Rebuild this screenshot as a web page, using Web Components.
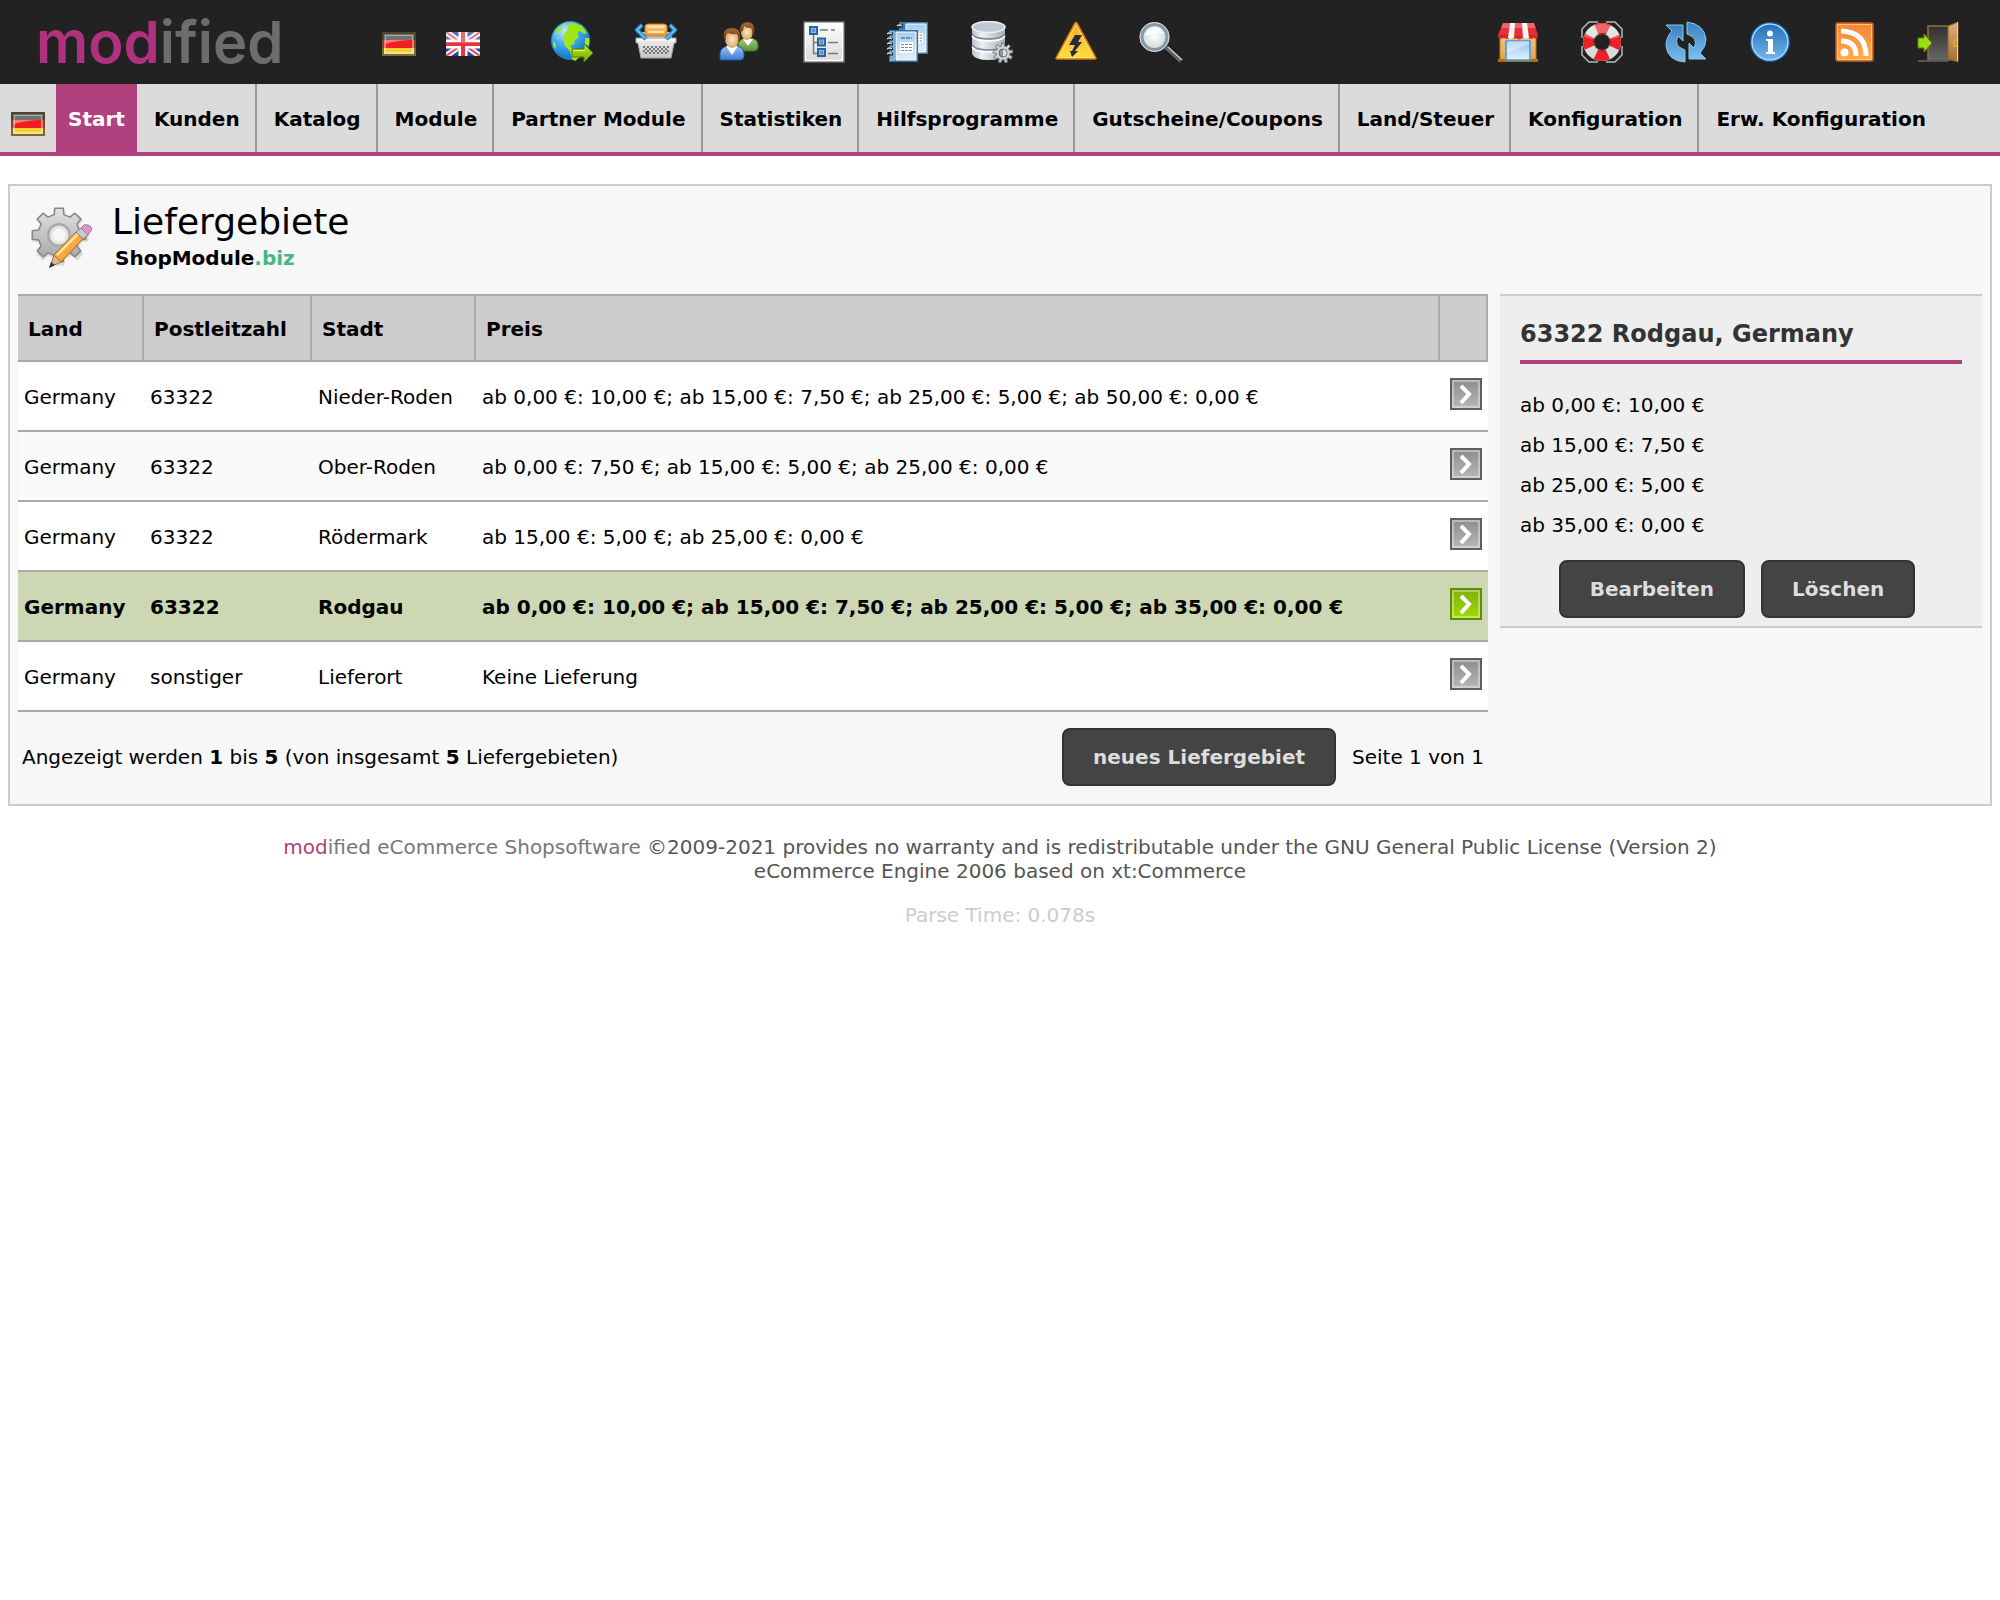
<!DOCTYPE html>
<html lang="de">
  <head>
    <meta charset="utf-8" />
    <title>Liefergebiete</title>
    <style>
      :root {
        --accent: #b0407e;
        --line: #aaa;
        --frame: #ccc;
      }
      body {
        margin: 0;
        background: #fff;
        color: #000;
        font: 20px/24px Verdana, "DejaVu Sans", sans-serif;
      }
    </style>
  </head>
  <body>
    <shop-header></shop-header>
    <shop-menu></shop-menu>
    <page-panel heading="Liefergebiete">
      <span slot="sub">ShopModule</span><span slot="suffix">.biz</span>
      <area-table></area-table>
      <info-box slot="side" heading="63322 Rodgau, Germany">
        <div>ab 0,00 €: 10,00 €</div>
        <div>ab 15,00 €: 7,50 €</div>
        <div>ab 25,00 €: 5,00 €</div>
        <div>ab 35,00 €: 0,00 €</div>
        <shop-button slot="actions">Bearbeiten</shop-button>
        <shop-button slot="actions">Löschen</shop-button>
      </info-box>
    </page-panel>
    <shop-footer></shop-footer>

    <script>
      const define = (name, render) => {
        customElements.define(name, class extends HTMLElement {
          connectedCallback() {
            if (!this.shadowRoot) {
              const template = document.createElement("template")
              template.innerHTML = render(this)
              this.attachShadow({ mode: "open" }).appendChild(template.content.cloneNode(true))
            }
          }
        })
      }

      const grad = (id, a, b) => `<linearGradient id="${id}" x1="0" y1="0" x2="0" y2="1"><stop stop-color="${a}"/><stop offset="1" stop-color="${b}"/></linearGradient>`

      // gear outline with n teeth around cx, cy
      const gear = (cx, cy, n, outer, inner) => {
        const points = []
        for (let i = 0; i < n; i++) {
          [[-0.3, inner], [-0.2, outer], [0.2, outer], [0.3, inner]].forEach(([d, r]) => {
            const a = (i + d) * 2 * Math.PI / n - Math.PI / 2
            points.push((cx + r * Math.cos(a)).toFixed(1) + "," + (cy + r * Math.sin(a)).toFixed(1))
          })
        }
        return points.join(" ")
      }

      const spiral = (x, y, n) => Array.from({ length: n }, (_, i) =>
        `<path d="M${x} ${y + i * 5}h5" stroke="#222" stroke-width="3"/><path d="M${x - 1} ${y + i * 5}q2-2 5 0" stroke="#d5dde3" stroke-width="1.3" fill="none"/>`).join("")

      const arrow = (a, b, edge) => `<defs>${grad("g", a, b)}</defs>
        <path fill="url(#g)" stroke="${edge}" stroke-width="2" d="M1 1h30v30H1z"/>
        <path fill="none" stroke="#fff" stroke-opacity=".5" stroke-width="1.5" d="M3 3h26v26H3z"/>
        <path fill="none" stroke="#fff" stroke-width="4" d="M11 8l8 8-8 9"/>`

      const icons = {
        de: [34, 24, `<path fill="#151515" d="M0 0h34v9H0z"/><path fill="#ee2020" d="M0 8h34v8H0z"/><path fill="#f4cf38" d="M0 16h34v8H0z"/>
          <path fill="#fff" fill-opacity=".4" d="M3 3h28v5q-14 0-28 4z"/>
          <path fill="none" stroke="#5c5130" stroke-opacity=".8" stroke-width="2" d="M1 1h32v22H1z"/>
          <path fill="none" stroke="#fff" stroke-opacity=".4" stroke-width="2" d="M3 3h28v18H3z"/>`],
        gb: [34, 24, `<path fill="#22469a" d="M0 0h34v24H0z"/>
          <path stroke="#f1eef4" stroke-width="6" d="M0 0l34 24M34 0L0 24"/>
          <path stroke="#e64a58" stroke-width="2" d="M0 0l34 24M34 0L0 24"/>
          <path stroke="#fff" stroke-width="9" d="M17 0v24M0 12h34"/>
          <path stroke="#e8333e" stroke-width="4" d="M17 0v24M0 12h34"/>
          <path fill="#fff" fill-opacity=".25" d="M0 0h34v11H0z"/>`],
        globe: [42, 42, `<defs><radialGradient id="g" cx=".35" cy=".25" r=".8"><stop stop-color="#bfeaff"/><stop offset=".5" stop-color="#3aa5e8"/><stop offset="1" stop-color="#0f6fb8"/></radialGradient>${grad("h", "#c4ec10", "#6fa800")}</defs>
          <circle cx="19.5" cy="19.5" r="19" fill="url(#g)" stroke="#1590d4"/>
          <path fill="#9fe61a" d="M17 3l6-1 8 3 5 7-3 1-4-3-3 2 2 4-4 3-1 4-4 2 3 4 5 1 3 5-6 5-3-2-2-8-5-5-2-7 1-5 4-5zM4 10l8-7-2 6-6 5zM2 20l3 3v5l-3-3zM34 17l4 0v8l-4-2z"/>
          <path fill="url(#h)" stroke="#547f00" d="M21 28h12v-5l9 9-9 9v-5H21z"/>
          <path stroke="#dff780" d="M22 29.500h12"/>`],
        basket: [42, 42, `<defs>${grad("g", "#f1f1f1", "#c4c4c6")}${grad("h", "#ffd28a", "#e59a2c")}</defs>
          <path fill="#d2d2d2" d="M6 11h31v8H6z"/>
          <rect x="10" y="3" width="22" height="12" rx="3" fill="url(#h)" stroke="#c57c1e"/><path stroke="#ffe5b5" stroke-width="2" d="M13 6h16M13 11h16"/>
          <path fill="url(#g)" stroke="#a9a9ac" d="M1 17h40v5h-2l-3 15H6L3 22H1z"/>
          <path stroke="#f8f8f8" stroke-width="2" d="M2 19h38"/>
          <path stroke="#77787b" stroke-width="2" stroke-dasharray="2 2" d="M8 26h27M10 28h24M8 30h27M10 32h24"/>
          <path fill="none" stroke="#1372ad" stroke-width="4.500" d="M11 18L2 9l5-5M31 18l9-9-5-5"/>
          <path fill="none" stroke="#5cb9ee" stroke-width="2.500" d="M11 18L2 9l5-5M31 18l9-9-5-5"/>`],
        users: [42, 42, `<defs>${grad("g", "#98c4f4", "#3c7ed2")}${grad("h", "#a6d07a", "#5c8e34")}${grad("k", "#a5692e", "#5f3410")}<radialGradient id="f"><stop stop-color="#ffebc5"/><stop offset="1" stop-color="#d9a66a"/></radialGradient></defs>
          <path fill="url(#h)" stroke="#446f24" d="M19 30v-7q1-5 8-6h4q8 1 8 7v3q-1 3-4 3z"/><path fill="#fff" d="M24 18h10l-5 7z"/>
          <ellipse cx="28" cy="11" rx="6" ry="8" fill="url(#f)"/><path fill="url(#k)" d="M21 11q-1-10 8-10 8 1 6 13l-2 2q1-6-1-9-5 0-7-2l-1 5z"/>
          <path fill="url(#g)" stroke="#1c57a8" d="M1 39v-7q1-6 8-7h8q8 1 8 8v3q-1 3-4 3z"/><path fill="#fff" d="M7 25h12l-6 9z"/>
          <ellipse cx="13" cy="18" rx="7" ry="9" fill="url(#f)"/><path fill="url(#k)" d="M5 18Q3 7 13 7q10 0 8 12l-2 3q1-6-1-9-6 1-9-1-3 2-2 7z"/>`],
        tree: [42, 42, `<defs>${grad("g", "#fff", "#d8d8da")}</defs>
          <path fill="url(#g)" stroke="#6c6c6c" stroke-width="1.500" d="M1 1h40v40H1z"/><path fill="none" stroke="#fff" stroke-width="1.500" d="M2.500 2.500h37v37h-37z"/>
          <path fill="none" stroke="#777" stroke-width="1.500" d="M10.500 13v19.500H15M10.500 21.500H15"/>
          <path fill="#8fbbe2" stroke="#2a62a2" stroke-width="2" d="M7 6h7v7H7zM15 17.500h7v7h-7zM15 28h7v7h-7z"/>
          <path fill="#5a93cb" d="M9 8h3v3H9zM17 19.500h3v3h-3zM17 30h3v3h-3z"/>
          <path stroke="#777" stroke-width="1.500" d="M17 9h8M28 9h4M25 21.500h10M25 32.500h10"/>`],
        docs: [42, 42, `<defs>${grad("g", "#a9cef0", "#dceefb")}</defs>
          <path fill="#3f7db5" d="M12 1h29v32H12z"/><path fill="url(#g)" stroke="#fff" d="M19 3h20v28H19z"/>
          <path fill="#fff" d="M29 12h7v10h-7z"/><path stroke="#888" stroke-dasharray="2 1" d="M30 14h5M30 17h5M30 20h5"/>${spiral(11, 5, 1)}
          <path fill="#3273ac" d="M2 9h29v32H2z"/><path fill="url(#g)" stroke="#fff" d="M9 11h20v28H9z"/><path fill="#78afd9" d="M3 10h5v30H3z"/>
          <path stroke="#4882ad" stroke-width="1.500" stroke-dasharray="4 1" d="M14 17h11"/><path fill="#fff" d="M13 21h13v11H13z"/>
          <path stroke="#858585" stroke-dasharray="3 1" d="M14 23.500h11M14 26.500h11M14 29.500h11"/>${spiral(1, 13, 5)}`],
        database: [42, 42, `<defs><linearGradient id="g"><stop stop-color="#b9c0ca"/><stop offset=".3" stop-color="#eef1f5"/><stop offset="1" stop-color="#a4acb7"/></linearGradient></defs>
          <path fill="url(#g)" d="M1 5v28q3 6 16.500 6T34 33V5z"/>
          <path fill="none" stroke="#7b8796" stroke-width="1.500" d="M1 13q3 5 16.500 5T34 13M1 24q3 5 16.500 5T34 24"/>
          <path fill="none" stroke="#fff" stroke-width="1.500" d="M1 15q3 5 16.500 5T34 15M1 26q3 5 16.500 5T34 26"/>
          <ellipse cx="17.500" cy="6" rx="16.500" ry="5.500" fill="#bfc9d4" stroke="#edf1f4" stroke-width="1.500"/>
          <polygon fill="#d3d3d3" stroke="#777" points="${gear(32, 32, 9, 10, 7)}"/><circle cx="32" cy="32" r="4" fill="#8d949c" stroke="#5e6670"/>
          <path fill="#d9e2e8" d="M32 28.500v7a3.500 3.500 0 0 0 0-7z"/>`],
        warning: [42, 42, `<defs>${grad("g", "#f6a62c", "#fde23c")}</defs>
          <path fill="url(#g)" stroke="#d97b0c" stroke-width="1.500" stroke-linejoin="round" d="M20 2q1-1 2 0l19 35q0 1-1 1H2q-1 0-1-1z"/>
          <path fill="none" stroke="#ffe27c" d="M21 4L3.500 36.500h35z"/>
          <path fill="#272b3d" d="M20 14h7l-4 7h4l-7 9h3l-6 6-2-6h2l3-6h-6z"/>`],
        search: [44, 42, `<defs><radialGradient id="g"><stop stop-color="#fff"/><stop offset=".8" stop-color="#d4dfe1"/><stop offset="1" stop-color="#aebbbf"/></radialGradient></defs>
          <path stroke="#111" stroke-width="7" d="M28 27l13 12"/><path stroke="#606060" stroke-width="5" d="M27 26l15 14"/><path stroke="#c4c4c4" stroke-width="1.500" d="M29 26l14 13"/>
          <circle cx="15.500" cy="16" r="13" fill="url(#g)" stroke="#8798a5" stroke-width="4"/><circle cx="15.500" cy="16" r="14.500" fill="none" stroke="#dce0e2"/>
          <path fill="#fff" fill-opacity=".8" d="M6 15q1-9 11-9 7 1 8 7-8-2-19 2z"/>`],
        shop: [42, 42, `<defs>${grad("g", "#96c0ee", "#e4f3ff")}${grad("h", "#f5c675", "#e2a24c")}</defs>
          <path fill="url(#h)" stroke="#bb7c26" d="M3 15h36v24H3z"/><path fill="#b06e10" d="M1 38h40v3H1z"/>
          <path fill="url(#g)" stroke="#3a9ae6" stroke-width="1.500" d="M9 20h24v19H9z"/><path fill="#fff" fill-opacity=".4" d="M10 32l22-9v-3H10z"/>
          <path fill="#e5303a" d="M6 2h31l4 12v2q-2 3-4 1-3 2-6 0-3 2-6 0-3 3-6 0-3 2-6 0-3 2-6 0-4 2-6-1v-2z"/>
          <path fill="#f5f5f5" d="M13 2h5l-1 15q-3 2-6 0zM25 2h5l2 15q-4 2-6 0z"/>
          <path fill="#fff" fill-opacity=".25" d="M6 2h31l2 5H4z"/><path stroke="#bd141c" d="M1 15h10M32 15h9M18 16h7"/>`],
        help: [42, 42, `<path fill="none" stroke="#b4b9bb" stroke-width="1.500" d="M17 1H8L1 8v9M25 1h9l7 7v9M17 41H8l-7-7v-9M25 41h9l7-7v-9"/>
          <circle cx="21" cy="21" r="13.500" fill="none" stroke="#d9dcd8" stroke-width="11"/>
          <circle cx="21" cy="21" r="13.500" fill="none" stroke="#ec2226" stroke-width="11" stroke-dasharray="12 9.200" stroke-dashoffset="6"/>
          <path fill="none" stroke="#fff" stroke-opacity=".3" stroke-width="9" d="M8 17a13.500 13.500 0 0 1 26 0"/>
          <circle cx="21" cy="21" r="8.500" fill="none" stroke="#000" stroke-opacity=".3"/>`],
        reload: [42, 42, `<defs>${grad("g", "#3a83c0", "#7bbdec")}</defs>
          <g fill="url(#g)" stroke="#8bc5ee" stroke-linejoin="round"><path d="M1 4h17v16l-5-5q-5 10 7 14v12Q3 40 1 25q0-9 6-15z"/>
          <path d="M22 1q17 2 19 17 0 8-6 14l6 6H24V22l5 5q5-10-7-14z"/></g>`],
        info: [42, 42, `<defs>${grad("g", "#2570b8", "#74b6ec")}</defs>
          <circle cx="21" cy="21" r="20" fill="#1559a6"/><circle cx="21" cy="21" r="18" fill="url(#g)" stroke="#a6daff" stroke-width="1.500"/>
          <circle cx="21" cy="12.500" r="3" fill="#fff"/><path fill="#fff" d="M17 18h7v13h2v2h-9v-2h2V20h-2z"/>`],
        rss: [42, 42, `<defs>${grad("g", "#f5853a", "#ffad4e")}</defs>
          <rect x="3" y="2" width="37" height="38" rx="2" fill="url(#g)" stroke="#cf5c18" stroke-width="1.500"/><path fill="none" stroke="#ffc28b" d="M4.500 3.500h34v35h-34z"/>
          <circle cx="11.500" cy="31.500" r="4" fill="#fff"/><g fill="none" stroke="#fff" stroke-width="5"><path d="M8 20q15 0 15 15M8 10q25 1 25 25"/></g>`],
        exit: [42, 42, `<defs>${grad("g", "#303030", "#686868")}${grad("h", "#dcb176", "#a36f31")}</defs>
          <path fill="url(#g)" stroke="#9c6b34" stroke-width="1.500" d="M11 40V5h22v35"/><path stroke="#555" stroke-width="2" d="M1 40h30"/>
          <path fill="url(#h)" stroke="#8c5c26" d="M31 5l10-4v40l-10-3z"/><path stroke="#f3cf98" d="M40.500 1v39"/><path fill="none" stroke="#eaaf29" stroke-width="1.500" d="M40 19h-3v6h3"/>
          <path fill="#9cdc12" stroke="#508b00" d="M1 17h6v-4l8 9-8 9v-4H1z"/>`],
        settings: [64, 64, `<defs>${grad("g", "#e2e2e3", "#a3a4a7")}<linearGradient id="h" x1="0" y1="0" x2="1" y2="1"><stop stop-color="#ffd375"/><stop offset="1" stop-color="#e78918"/></linearGradient></defs>
          <polygon fill="#000" fill-opacity=".12" points="${gear(29, 31, 8, 29, 22)}"/>
          <polygon fill="url(#g)" stroke="#85868a" stroke-width="1.500" stroke-linejoin="round" points="${gear(28, 29, 8, 27, 21)}"/>
          <circle cx="28" cy="29" r="12" fill="#a9aaad"/><circle cx="28" cy="29" r="8" fill="#f7f7f7" stroke="#e5e5e5" stroke-width="3"/>
          <path fill="#e0b88a" stroke="#9a7140" d="M19 61l4-12 7 7z"/><path fill="#333" d="M18 62l2-6 4 3z"/>
          <path fill="url(#h)" stroke="#ba6a10" d="M23 49l22-23 7 7-22 23z"/><path stroke="#ffe9ab" stroke-width="2" d="M26 49l21-21"/>
          <path fill="#c7cbd0" stroke="#7d8288" d="M45 26l5-4 7 7-5 4z"/><path fill="#d897c6" stroke="#ac6f9e" d="M50 22l3-3q3-1 6 1t1 5l-3 4z"/>`],
        arrow: [32, 32, arrow("#8b8b8b", "#b9b9b9", "#5f5f5f")],
        "arrow-on": [32, 32, arrow("#7fae0c", "#9fdc00", "#5a9002")],
      }

      define("shop-icon", (el) => {
        const [w, h, shapes] = icons[el.getAttribute("name")]
        return `
          <style>
            :host { display: inline-block; vertical-align: top; }
            svg { display: block; width: ${w}px; height: ${h}px; }
          </style>
          <svg viewBox="0 0 ${w} ${h}" aria-hidden="true">${shapes}</svg>`
      })

      define("shop-button", () => `
        <style>
          :host { display: inline-block; }
          button {
            display: block;
            padding: 15px 29px;
            border: 2px solid #333;
            border-radius: 8px;
            background: #444;
            color: #ddd;
            font: inherit;
            font-weight: bold;
            cursor: pointer;
          }
        </style>
        <button type="button"><slot></slot></button>`)

      const links = (list) => list.map(([name, label]) =>
        `<a href="#" aria-label="${label}"><shop-icon name="${name}"></shop-icon></a>`).join("")

      define("shop-header", () => `
        <style>
          :host {
            display: flex;
            align-items: center;
            height: 84px;
            padding: 0 41px 0 36px;
            background: #222;
          }
          nav { display: flex; align-items: center; gap: 42px; }
          .logo {
            width: 346px;
            color: #6d6d6d;
            font: 600 58px/64px Inter, sans-serif;
            text-decoration: none;
          }
          .logo span { color: #b0327e; }
          .lang { gap: 30px; padding-top: 4px; margin-right: 71px; }
          .tools { margin-left: auto; }
          nav a { display: block; }
        </style>
        <a class="logo" href="#"><span>mod</span>ified</a>
        <nav class="lang">${links([["de", "Deutsch"], ["gb", "English"]])}</nav>
        <nav>${links([["globe", "Shop"], ["basket", "Bestellungen"], ["users", "Kunden"], ["tree", "Kategorien"], ["docs", "Content"], ["database", "Datenbank"], ["warning", "Logs"], ["search", "Suche"]])}</nav>
        <nav class="tools">${links([["shop", "Shop"], ["help", "Hilfe"], ["reload", "Cache"], ["info", "Info"], ["rss", "News"], ["exit", "Abmelden"]])}</nav>`)

      define("shop-menu", () => `
        <style>
          :host {
            display: flex;
            border-bottom: 4px solid var(--accent);
            background: #dbdbdb;
            font-weight: bold;
            white-space: nowrap;
          }
          a {
            padding: 23px 15px 21px 17px;
            border-right: 2px solid #999;
            color: #000;
            text-decoration: none;
          }
          a:last-child { border: 0; }
          .flag { padding: 28px 11px 0; border: 0; }
          .active {
            padding: 23px 12px 21px;
            border: 0;
            background: var(--accent);
            color: #fff;
          }
        </style>
        <a class="flag" href="#" aria-label="Deutsch"><shop-icon name="de"></shop-icon></a>
        <a class="active" href="#">Start</a>
        ${["Kunden", "Katalog", "Module", "Partner Module", "Statistiken", "Hilfsprogramme", "Gutscheine/Coupons", "Land/Steuer", "Konfiguration", "Erw. Konfiguration"].map((t) => `<a href="#">${t}</a>`).join("")}`)

      define("page-panel", (el) => `
        <style>
          :host {
            display: block;
            margin: 28px 8px;
            padding: 0 8px 18px;
            border: 2px solid var(--frame);
            background: #f7f7f7;
          }
          header { display: flex; gap: 17px; height: 88px; padding: 20px 13px 0; }
          h1 { margin: 0; font-weight: normal; font-size: 36px; line-height: 32px; }
          p { margin: 8px 3px; font-weight: bold; }
          .suffix { color: #48b587; }
          .columns {
            display: grid;
            grid-template-columns: 1fr 482px;
            gap: 12px;
            align-items: start;
          }
        </style>
        <header>
          <shop-icon name="settings"></shop-icon>
          <div>
            <h1>${el.getAttribute("heading")}</h1>
            <p><slot name="sub"></slot><span class="suffix"><slot name="suffix"></slot></span></p>
          </div>
        </header>
        <div class="columns">
          <main><slot></slot></main>
          <slot name="side"></slot>
        </div>`)

      const areas = [
        ["Germany", "63322", "Nieder-Roden", "ab 0,00 €: 10,00 €; ab 15,00 €: 7,50 €; ab 25,00 €: 5,00 €; ab 50,00 €: 0,00 €"],
        ["Germany", "63322", "Ober-Roden", "ab 0,00 €: 7,50 €; ab 15,00 €: 5,00 €; ab 25,00 €: 0,00 €"],
        ["Germany", "63322", "Rödermark", "ab 15,00 €: 5,00 €; ab 25,00 €: 0,00 €"],
        ["Germany", "63322", "Rodgau", "ab 0,00 €: 10,00 €; ab 15,00 €: 7,50 €; ab 25,00 €: 5,00 €; ab 35,00 €: 0,00 €"],
        ["Germany", "sonstiger", "Lieferort", "Keine Lieferung"],
      ]
      const selected = 3

      define("area-table", () => `
        <style>
          :host { display: block; }
          table { width: 100%; border-collapse: separate; border-spacing: 0; table-layout: fixed; }
          .land { width: 126px; }
          .zip { width: 168px; }
          .city { width: 164px; }
          .go { width: 48px; }
          th, td { box-sizing: border-box; text-align: left; white-space: nowrap; }
          th {
            height: 68px;
            padding: 2px 10px 0;
            border: solid var(--line);
            border-width: 2px 2px 2px 0;
            background: #ccc;
          }
          td { height: 70px; padding: 2px 6px 0; border-bottom: 2px solid var(--line); background: #fff; }
          tr:nth-child(even) td { background: #fafafa; }
          tr.selected td { background: #cdd7b4; font-weight: bold; }
          td:last-child { padding: 0 6px 4px; text-align: right; }
          td a { display: block; }
          footer { display: flex; align-items: center; gap: 16px; padding: 16px 4px 0; }
          footer span:first-child { flex: 1; }
        </style>
        <table>
          <colgroup><col class="land"><col class="zip"><col class="city"><col><col class="go"></colgroup>
          <thead>
            <tr><th>Land</th><th>Postleitzahl</th><th>Stadt</th><th>Preis</th><th></th></tr>
          </thead>
          <tbody>
            ${areas.map((row, i) => `<tr${i === selected ? ' class="selected"' : ""}>
              ${row.map((t) => `<td>${t}</td>`).join("")}
              <td><a href="#" aria-label="Auswählen"><shop-icon name="${i === selected ? "arrow-on" : "arrow"}"></shop-icon></a></td>
            </tr>`).join("")}
          </tbody>
        </table>
        <footer>
          <span>Angezeigt werden <b>1</b> bis <b>5</b> (von insgesamt <b>5</b> Liefergebieten)</span>
          <shop-button>neues Liefergebiet</shop-button>
          <span>Seite 1 von 1</span>
        </footer>`)

      define("info-box", (el) => `
        <style>
          :host {
            display: block;
            padding: 0 20px 8px;
            border: solid var(--frame);
            border-width: 2px 0;
            background: #eee;
            line-height: 40px;
          }
          h2 {
            margin: 0 0 21px;
            padding: 24px 0 12px;
            border-bottom: 4px solid var(--accent);
            color: #333;
            font-size: 24px;
            line-height: 28px;
          }
          .actions {
            display: flex;
            justify-content: center;
            gap: 16px;
            padding: 15px 8px 0 0;
            line-height: 24px;
          }
        </style>
        <h2>${el.getAttribute("heading")}</h2>
        <slot></slot>
        <div class="actions"><slot name="actions"></slot></div>`)

      define("shop-footer", () => `
        <style>
          :host { display: block; padding-top: 1px; color: #555; text-align: center; }
          p { margin: 0 0 20px; }
          a { color: #777; text-decoration: none; }
          a span { color: var(--accent); }
          .time { color: #ccc; }
        </style>
        <p><a href="#"><span>mod</span>ified eCommerce Shopsoftware</a> ©2009-2021 provides no warranty and is redistributable under the GNU General Public License (Version 2)<br>eCommerce Engine 2006 based on xt:Commerce</p>
        <p class="time">Parse Time: 0.078s</p>`)
    </script>
  </body>
</html>
